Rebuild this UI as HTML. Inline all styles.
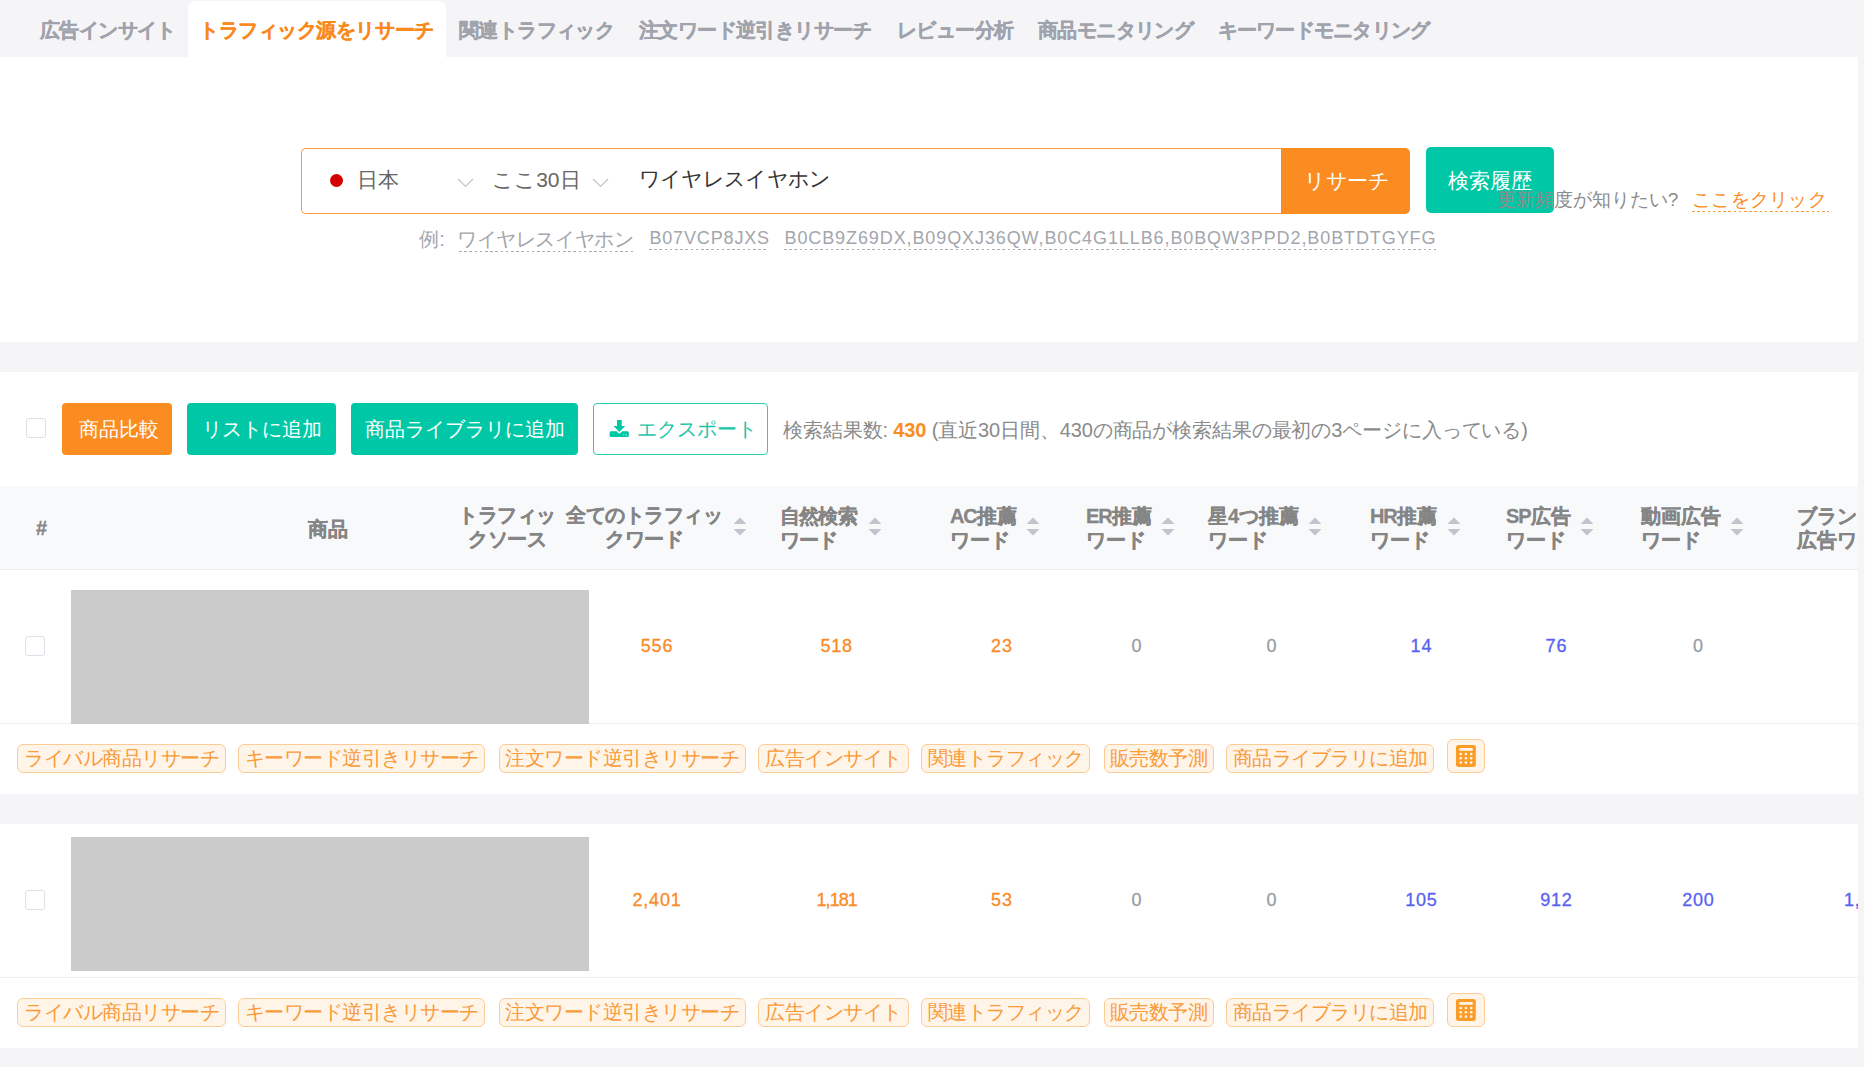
<!DOCTYPE html>
<html lang="ja">
<head>
<meta charset="utf-8">
<style>
*{box-sizing:border-box;margin:0;padding:0}
html,body{width:1865px;height:1067px;overflow:hidden}
body{position:relative;background:#f5f5f7;font-family:"Liberation Sans",sans-serif;color:#333}
.a{position:absolute;white-space:nowrap}
.panel{position:absolute;left:0;width:1858px;background:#fff}
.tab{position:absolute;top:15.5px;font-size:20px;font-weight:bold;color:#a0a3ac;line-height:28px;letter-spacing:-0.6px;white-space:nowrap;-webkit-text-stroke:0.3px currentColor}
.active-tab{position:absolute;left:188px;top:1px;width:258px;height:56px;background:#fff;border-radius:8px 8px 0 0}
.btn{position:absolute;color:#fff;font-size:20px;text-align:center;border-radius:4px}
.chk{position:absolute;width:20px;height:20px;border:1px solid #dde0e7;border-radius:3px;background:#fff}
.hdr{position:absolute;font-size:20px;font-weight:bold;color:#858585;line-height:24px;-webkit-text-stroke:0.3px #858585}
.sort{position:absolute;width:14px;height:19px}
.num{position:absolute;font-size:18px;line-height:24px;text-align:center;width:120px;letter-spacing:0.8px;-webkit-text-stroke:0.3px currentColor;text-indent:0.8px}
.dash{height:1px;background:repeating-linear-gradient(to right,#a9acb3 0 2.6px,transparent 2.6px 5.2px)}
.tag{position:absolute;height:29px;border:1px solid #fdcb95;background:#fff4e8;border-radius:6px;color:#f89b3a;font-size:20px;line-height:27px;padding:0;text-align:center;white-space:nowrap;letter-spacing:-0.5px}
</style>
</head>
<body>
<!-- tab bar -->
<div class="active-tab"></div>
<div class="tab" style="left:40px">広告インサイト</div>
<div class="tab" style="left:199px;color:#fa8a1e;letter-spacing:-0.45px">トラフィック源をリサーチ</div>
<div class="tab" style="left:459px">関連トラフィック</div>
<div class="tab" style="left:639px">注文ワード逆引きリサーチ</div>
<div class="tab" style="left:897px">レビュー分析</div>
<div class="tab" style="left:1038px">商品モニタリング</div>
<div class="tab" style="left:1217.5px;letter-spacing:-0.75px">キーワードモニタリング</div>

<!-- search panel -->
<div class="panel" style="top:57px;height:285px"></div>
<div class="a" style="left:301px;top:148px;width:981px;height:66px;border:1px solid #fa9a3c;border-right:none;border-radius:5px 0 0 5px;background:#fff"></div>
<div class="a" style="left:330px;top:174px;width:13px;height:13px;border-radius:50%;background:#d40000"></div>
<div class="a" style="left:356.7px;top:166px;font-size:21px;color:#666;line-height:28px">日本</div>
<div class="a" style="left:492.2px;top:165.5px;font-size:21px;color:#666;line-height:28px">ここ30日</div>
<div class="a" style="left:638.8px;top:164.7px;font-size:21px;color:#333;line-height:28px;letter-spacing:-0.7px">ワイヤレスイヤホン</div>
<svg class="a" style="left:457px;top:178px" width="17" height="10" viewBox="0 0 17 10"><path d="M1 1 L8.5 8.5 L16 1" fill="none" stroke="#c0c4cc" stroke-width="1.2"/></svg>
<svg class="a" style="left:592px;top:178px" width="17" height="10" viewBox="0 0 17 10"><path d="M1 1 L8.5 8.5 L16 1" fill="none" stroke="#c0c4cc" stroke-width="1.2"/></svg>
<div class="btn" style="left:1281px;top:148px;width:129px;height:66px;background:#fa8c22;border-radius:0 5px 5px 0;line-height:66px;font-size:21px;letter-spacing:-0.5px;padding-left:2px">リサーチ</div>
<div class="btn" style="left:1426px;top:147px;width:128px;height:66px;background:#00c8a6;border-radius:5px;line-height:68px;font-size:21px">検索履歴</div>
<div class="a" style="left:1496.7px;top:189.5px;font-size:19px;color:#8c8c8c;line-height:19px">更新頻度が知りたい?</div>
<div class="a" style="left:1692px;top:189.5px;font-size:19px;color:#fa8c22;line-height:19px;letter-spacing:0.3px">ここをクリック</div>
<div class="a dash" style="left:1692px;top:211px;width:137px;background:repeating-linear-gradient(to right,#fa9a3c 0 2.6px,transparent 2.6px 5.2px)"></div>

<div class="a" style="left:419.2px;top:229px;font-size:20px;color:#a3a6ad;line-height:20px">例:</div>
<div class="a" style="left:457px;top:229px;font-size:20px;color:#a3a6ad;line-height:20px;letter-spacing:-0.4px">ワイヤレスイヤホン</div>
<div class="a" style="left:649.4px;top:229.2px;font-size:18px;color:#a3a6ad;line-height:18px;letter-spacing:0.85px">B07VCP8JXS</div>
<div class="a" style="left:784.5px;top:229px;font-size:18px;color:#a3a6ad;line-height:18px;letter-spacing:0.9px">B0CB9Z69DX,B09QXJ36QW,B0C4G1LLB6,B0BQW3PPD2,B0BTDTGYFG</div>
<div class="a dash" style="left:459px;top:251px;width:175px"></div>
<div class="a dash" style="left:649px;top:249px;width:120px"></div>
<div class="a dash" style="left:783.7px;top:249px;width:652px"></div>

<!-- results panel -->
<div class="panel" style="top:372px;height:422px"></div>
<div class="chk" style="left:26px;top:418px"></div>
<div class="btn" style="left:62px;top:403px;width:110px;height:52px;background:#fa8c22;line-height:52px;padding-left:3px">商品比較</div>
<div class="btn" style="left:187px;top:403px;width:149px;height:52px;background:#00c8a6;line-height:52px">リストに追加</div>
<div class="btn" style="left:351px;top:403px;width:227px;height:52px;background:#00c8a6;line-height:52px">商品ライブラリに追加</div>
<div class="btn" style="left:593px;top:403px;width:175px;height:52px;background:#fff;border:1px solid #2ccfb3;color:#1cc5a8;line-height:50px;text-align:left;padding-left:43px">エクスポート</div>
<svg class="a" style="left:609px;top:419px" width="20" height="19" viewBox="0 0 20 19"><path d="M8 1h4.7v6h3.5l-5.85 6.1-5.85-6.1h3.5z" fill="#00c8a6"/><path d="M2 12.2h5.3l3.05 2.6 3.05-2.6h5.1a1.5 1.5 0 0 1 1.4 1.5v2.7a1.5 1.5 0 0 1-1.5 1.5H2.1a1.5 1.5 0 0 1-1.5-1.5v-2.7a1.5 1.5 0 0 1 1.4-1.5z" fill="#00c8a6"/><rect x="14.3" y="15.3" width="1.1" height="1.1" fill="#bff0e6"/><rect x="16.8" y="15.3" width="1.1" height="1.1" fill="#bff0e6"/></svg>
<div class="a" style="left:783px;top:416px;font-size:20px;color:#8a8a8a;line-height:28px;letter-spacing:-0.12px">検索結果数: <span style="color:#fa8c22;font-weight:bold">430</span> (直近30日間、430の商品が検索結果の最初の3ページに入っている)</div>

<!-- header -->
<div class="a" style="left:0;top:486px;width:1858px;height:84px;background:#f8f9fb;border-bottom:1px solid #ebeef5"></div>
<div class="hdr" style="left:36px;top:516px">#</div>
<div class="hdr" style="left:308px;top:516.5px">商品</div>
<div class="hdr" style="left:440px;top:503px;width:134px;text-align:center;letter-spacing:-0.5px">トラフィッ<br>クソース</div>
<div class="hdr" style="left:562px;top:503px;width:164px;text-align:center;letter-spacing:-0.5px">全てのトラフィッ<br>クワード</div>
<div class="hdr" style="left:779.5px;top:504px;letter-spacing:-0.6px">自然検索<br>ワード</div>
<div class="hdr" style="left:950px;top:504px"><span style="letter-spacing:-1.2px">A</span><span style="letter-spacing:-0.6px">C</span>推薦<br>ワード</div>
<div class="hdr" style="left:1086px;top:504px"><span style="letter-spacing:-1.2px">E</span><span style="letter-spacing:-0.6px">R</span>推薦<br>ワード</div>
<div class="hdr" style="left:1208px;top:504px">星4つ推薦<br>ワード</div>
<div class="hdr" style="left:1370px;top:504px"><span style="letter-spacing:-1.2px">H</span><span style="letter-spacing:-0.6px">R</span>推薦<br>ワード</div>
<div class="hdr" style="left:1506px;top:504px"><span style="letter-spacing:-1.2px">S</span><span style="letter-spacing:-0.6px">P</span>広告<br>ワード</div>
<div class="hdr" style="left:1641px;top:504px">動画広告<br>ワード</div>
<div class="hdr" style="left:1797px;top:504px;white-space:nowrap">ブラン<br>広告ワード</div>

<svg class="a" style="left:733px;top:517px" width="14" height="19" viewBox="0 0 14 19"><path d="M7 0.5L13.5 7H0.5z" fill="#c0c4cc"/><path d="M0.5 12H13.5L7 18.5z" fill="#c0c4cc"/></svg>
<svg class="a" style="left:868px;top:517px" width="14" height="19" viewBox="0 0 14 19"><path d="M7 0.5L13.5 7H0.5z" fill="#c0c4cc"/><path d="M0.5 12H13.5L7 18.5z" fill="#c0c4cc"/></svg>
<svg class="a" style="left:1026px;top:517px" width="14" height="19" viewBox="0 0 14 19"><path d="M7 0.5L13.5 7H0.5z" fill="#c0c4cc"/><path d="M0.5 12H13.5L7 18.5z" fill="#c0c4cc"/></svg>
<svg class="a" style="left:1161px;top:517px" width="14" height="19" viewBox="0 0 14 19"><path d="M7 0.5L13.5 7H0.5z" fill="#c0c4cc"/><path d="M0.5 12H13.5L7 18.5z" fill="#c0c4cc"/></svg>
<svg class="a" style="left:1308px;top:517px" width="14" height="19" viewBox="0 0 14 19"><path d="M7 0.5L13.5 7H0.5z" fill="#c0c4cc"/><path d="M0.5 12H13.5L7 18.5z" fill="#c0c4cc"/></svg>
<svg class="a" style="left:1447px;top:517px" width="14" height="19" viewBox="0 0 14 19"><path d="M7 0.5L13.5 7H0.5z" fill="#c0c4cc"/><path d="M0.5 12H13.5L7 18.5z" fill="#c0c4cc"/></svg>
<svg class="a" style="left:1580px;top:517px" width="14" height="19" viewBox="0 0 14 19"><path d="M7 0.5L13.5 7H0.5z" fill="#c0c4cc"/><path d="M0.5 12H13.5L7 18.5z" fill="#c0c4cc"/></svg>
<svg class="a" style="left:1730px;top:517px" width="14" height="19" viewBox="0 0 14 19"><path d="M7 0.5L13.5 7H0.5z" fill="#c0c4cc"/><path d="M0.5 12H13.5L7 18.5z" fill="#c0c4cc"/></svg>
<!-- row 1 -->
<div class="chk" style="left:25px;top:636px"></div>
<div class="a" style="left:0;top:723px;width:1858px;height:1px;background:#ebeef5"></div>
<div class="a" style="left:71px;top:590px;width:518px;height:134px;background:#cbcbcb"></div>

<!-- gap -->
<!-- row 2 -->
<div class="panel" style="top:824px;height:224px"></div>
<div class="chk" style="left:25px;top:890px"></div>
<div class="a" style="left:71px;top:837px;width:518px;height:133.5px;background:#cbcbcb"></div>
<div class="a" style="left:0;top:977px;width:1858px;height:1px;background:#ebeef5"></div>
<div class="num" style="left:596.6px;top:634px;color:#fa8a25">556</div>
<div class="num" style="left:776.3px;top:634px;color:#fa8a25">518</div>
<div class="num" style="left:941.5px;top:634px;color:#fa8a25">23</div>
<div class="num" style="left:1076.4px;top:634px;color:#999ca3">0</div>
<div class="num" style="left:1211.5px;top:634px;color:#999ca3">0</div>
<div class="num" style="left:1361.0px;top:634px;color:#5662f0">14</div>
<div class="num" style="left:1496.0px;top:634px;color:#5662f0">76</div>
<div class="num" style="left:1638.0px;top:634px;color:#999ca3">0</div>
<div class="num" style="left:596.6px;top:888px;color:#fa8a25">2,401</div>
<div class="num" style="left:776.3px;top:888px;color:#fa8a25;letter-spacing:-0.9px" >1,181</div>
<div class="num" style="left:941.5px;top:888px;color:#fa8a25">53</div>
<div class="num" style="left:1076.4px;top:888px;color:#999ca3">0</div>
<div class="num" style="left:1211.5px;top:888px;color:#999ca3">0</div>
<div class="num" style="left:1361.0px;top:888px;color:#5662f0">105</div>
<div class="num" style="left:1496.0px;top:888px;color:#5662f0">912</div>
<div class="num" style="left:1638.0px;top:888px;color:#5662f0">200</div>
<div class="a" style="left:1844px;top:888px;font-size:18px;line-height:24px;letter-spacing:0.8px;-webkit-text-stroke:0.3px currentColor;color:#5662f0">1,201</div>
<div class="tag" style="left:17px;top:744px;width:209px">ライバル商品リサーチ</div>
<div class="tag" style="left:238px;top:744px;width:247px">キーワード逆引きリサーチ</div>
<div class="tag" style="left:498.5px;top:744px;width:247px">注文ワード逆引きリサーチ</div>
<div class="tag" style="left:758px;top:744px;width:151px">広告インサイト</div>
<div class="tag" style="left:921px;top:744px;width:169px">関連トラフィック</div>
<div class="tag" style="left:1103.5px;top:744px;width:110px">販売数予測</div>
<div class="tag" style="left:1226px;top:744px;width:208px">商品ライブラリに追加</div>
<div class="tag" style="left:1447px;top:739px;width:38px;height:34px;padding:0"><svg style="position:absolute;left:8.3px;top:5px" width="20" height="22" viewBox="0 0 20 22"><rect x="0" y="0" width="19.8" height="21.9" rx="2.6" fill="#f99c28"/><rect x="3.1" y="3.1" width="13.8" height="2.7" rx="1.3" fill="#fff4e8"/><g fill="#fff4e8"><circle cx="4.7" cy="9" r="1.3"/><circle cx="9.9" cy="9" r="1.3"/><circle cx="15.2" cy="9" r="1.3"/><circle cx="4.7" cy="13.2" r="1.3"/><circle cx="9.9" cy="13.2" r="1.3"/><circle cx="15.2" cy="13.2" r="1.3"/><circle cx="4.7" cy="17.6" r="1.3"/><circle cx="9.9" cy="17.6" r="1.3"/><circle cx="15.2" cy="17.6" r="1.3"/></g></svg></div>
<div class="tag" style="left:17px;top:998px;width:209px">ライバル商品リサーチ</div>
<div class="tag" style="left:238px;top:998px;width:247px">キーワード逆引きリサーチ</div>
<div class="tag" style="left:498.5px;top:998px;width:247px">注文ワード逆引きリサーチ</div>
<div class="tag" style="left:758px;top:998px;width:151px">広告インサイト</div>
<div class="tag" style="left:921px;top:998px;width:169px">関連トラフィック</div>
<div class="tag" style="left:1103.5px;top:998px;width:110px">販売数予測</div>
<div class="tag" style="left:1226px;top:998px;width:208px">商品ライブラリに追加</div>
<div class="tag" style="left:1447px;top:993px;width:38px;height:34px;padding:0"><svg style="position:absolute;left:8.3px;top:5px" width="20" height="22" viewBox="0 0 20 22"><rect x="0" y="0" width="19.8" height="21.9" rx="2.6" fill="#f99c28"/><rect x="3.1" y="3.1" width="13.8" height="2.7" rx="1.3" fill="#fff4e8"/><g fill="#fff4e8"><circle cx="4.7" cy="9" r="1.3"/><circle cx="9.9" cy="9" r="1.3"/><circle cx="15.2" cy="9" r="1.3"/><circle cx="4.7" cy="13.2" r="1.3"/><circle cx="9.9" cy="13.2" r="1.3"/><circle cx="15.2" cy="13.2" r="1.3"/><circle cx="4.7" cy="17.6" r="1.3"/><circle cx="9.9" cy="17.6" r="1.3"/><circle cx="15.2" cy="17.6" r="1.3"/></g></svg></div>
<div class="a" style="left:1858px;top:0;width:6px;height:1067px;background:#f5f5f7"></div>
<div class="a" style="left:1864px;top:0;width:1px;height:1067px;background:#fdfdfd"></div>
</body>
</html>
